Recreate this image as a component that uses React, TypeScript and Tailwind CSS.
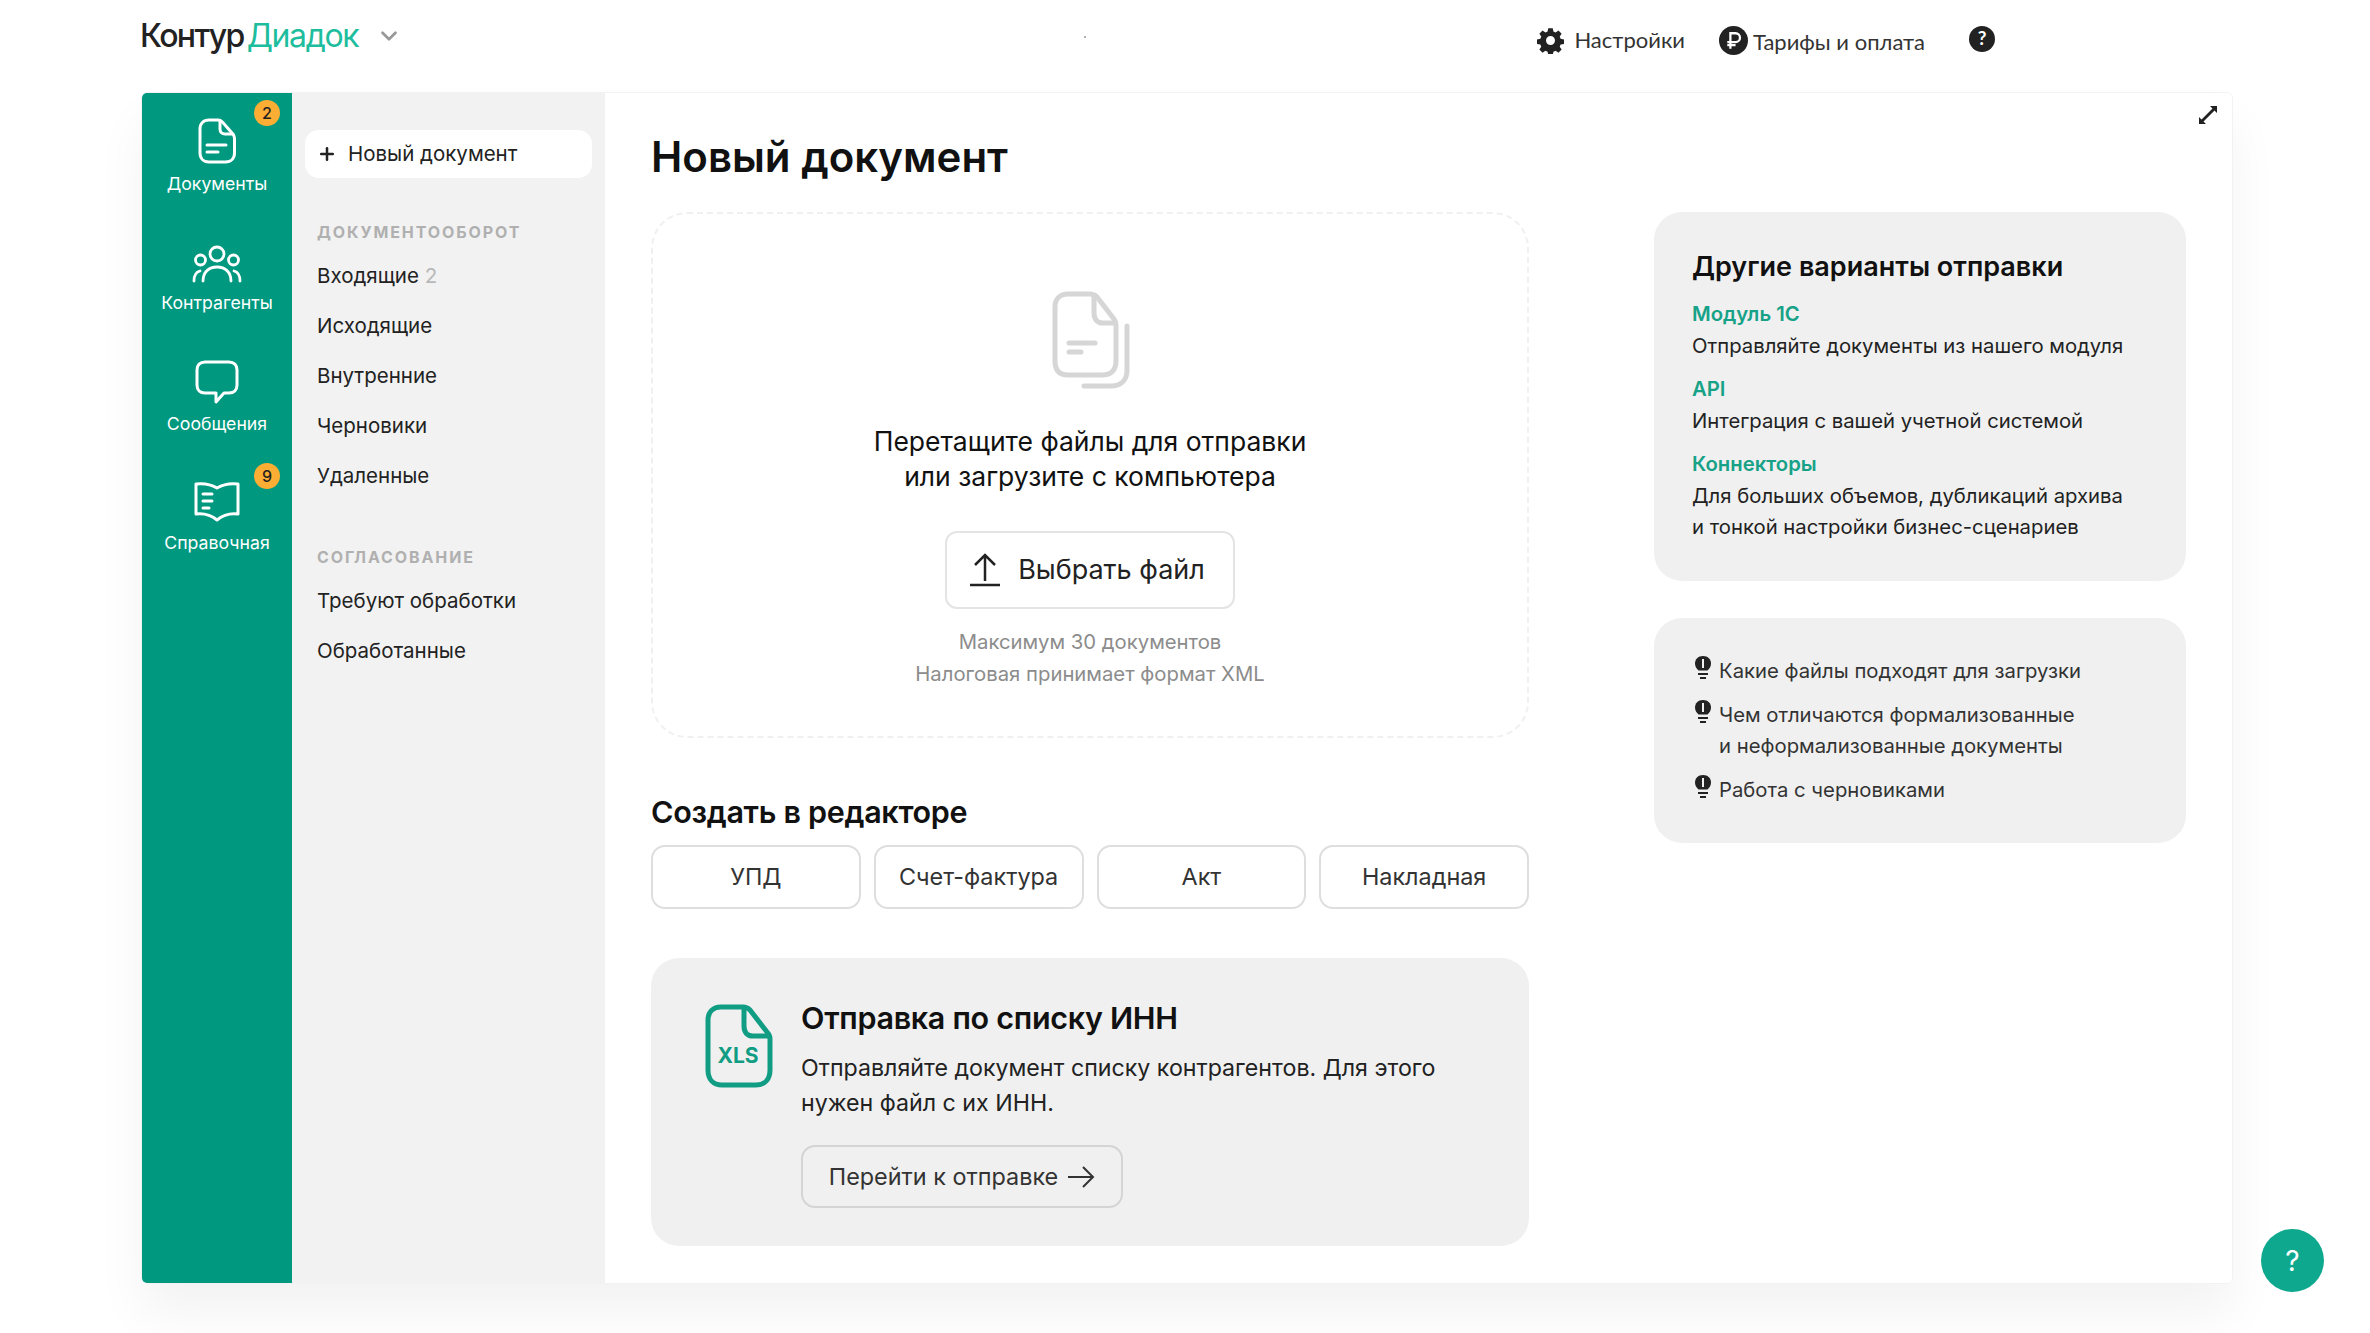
import { ChevronDown, Plus } from "lucide-react";

const SANS = "font-['Inter','Liberation_Sans',sans-serif]";

function DocIcon() {
  return (
    <svg width="38" height="46" viewBox="0 0 38 46" fill="none" stroke="#fff" strokeWidth="3" strokeLinecap="round" strokeLinejoin="round">
      <path d="M11 2h9c2 0 3 .6 4.400 2l9.600 11c1.400 1.500 2.500 3 2.500 5v15c0 5.500-3.500 9-9 9H11c-5.500 0-9-3.500-9-9V11c0-5.500 3.500-9 9-9z" />
      <path d="M22 3v8c0 3 2 5 5 5h8" />
      <path d="M9 27h19M9 34h11" />
    </svg>
  );
}

function PeopleIcon() {
  return (
    <svg width="50" height="38" viewBox="0 0 50 38" fill="none" stroke="#fff" strokeWidth="2.800" strokeLinecap="round">
      <circle cx="25" cy="9" r="7" />
      <circle cx="8.500" cy="15" r="5" />
      <circle cx="41.500" cy="15" r="5" />
      <path d="M11 36c0-9 6-14 14-14s14 5 14 14" />
      <path d="M2 36c0-5 2-9 6-10M48 36c0-5-2-9-6-10" />
    </svg>
  );
}

function ChatIcon() {
  return (
    <svg width="44" height="44" viewBox="0 0 44 44" fill="none" stroke="#fff" strokeWidth="3" strokeLinejoin="round">
      <path d="M10 2h24c5 0 8 3 8 8v15c0 5-3 8-8 8h-5l-8 9v-9H10c-5 0-8-3-8-8V10c0-5 3-8 8-8z" />
    </svg>
  );
}

function BookIcon() {
  return (
    <svg width="46" height="42" viewBox="0 0 46 42" fill="none" stroke="#fff" strokeWidth="3" strokeLinecap="round" strokeLinejoin="round">
      <path d="M23 7C18 4 10 2 2 3v30c8-1 15 1 21 6 6-5 13-7 21-6V3c-8-1-16 1-21 4" />
      <path d="M9 13h9M9 20h9M9 27h6" />
    </svg>
  );
}

function RailItem({ icon, label, badge, iconBox }: { icon: React.ReactNode; label: string; badge?: string; iconBox: string }) {
  return (
    <div className="relative flex w-full flex-col items-center">
      <div className={`flex w-full items-end justify-center ${iconBox}`}>{icon}</div>
      <span className="mt-[9px] text-[17.700px] leading-[22px] text-white">{label}</span>
      {badge && (
        <span className="absolute top-[-18px] right-[12px] flex h-[26px] w-[26px] items-center justify-center rounded-full bg-[#fcad33] text-[16px] font-medium text-[#222]">
          {badge}
        </span>
      )}
    </div>
  );
}

function TipIcon() {
  return (
    <svg width="18" height="26" viewBox="0 0 18 26" fill="#222" className="shrink-0">
      <path d="M9 1C4 1 1 4.500 1 8.500c0 3 1.500 5 3.500 7h9c2-2 3.500-4 3.500-7C17 4.500 14 1 9 1z" />
      <path d="M8 4h2v9H8z" fill="#f0f0f0" />
      <path d="M4 18h10v2H4zM6 22h6v2H6z" />
    </svg>
  );
}

const NAV_ONE = ["Исходящие", "Внутренние", "Черновики", "Удаленные"];

const OPTIONS = [
  { title: "Модуль 1С", text: ["Отправляйте документы из нашего модуля"] },
  { title: "API", text: ["Интеграция с вашей учетной системой"] },
  { title: "Коннекторы", text: ["Для больших объемов, дубликаций архива", "и тонкой настройки бизнес-сценариев"] },
];

export default function App() {
  return (
    <div className={`relative h-[1333px] overflow-hidden bg-white text-[#222] ${SANS}`}>
      {/* top bar */}
      <header className="flex h-[92px] items-start pt-[16px] pl-[140px]">
        <div className="flex items-center">
          <span className="text-[32px] leading-[40px] font-medium tracking-[-1.600px] text-[#222]">Контур</span>
          <span className="ml-[3px] text-[32px] leading-[40px] tracking-[-1.400px] text-[#1dbd9d]">Диадок</span>
          <ChevronDown className="ml-[18px] text-[#999]" size={26} strokeWidth={2.500} />
        </div>
        <span className="absolute top-[36px] left-[1084px] h-[2px] w-[2px] rounded-full bg-[#999]" />
        <div className="ml-auto flex items-center pt-[7px] pr-[375px] font-['Lato',sans-serif] text-[22px] text-[#333]">
          <svg width="27" height="27" viewBox="0 0 24 24" fill="#222">
            <path fillRule="evenodd" d="M10 1h4l.6 3 1.900.8 2.600-1.700 2.800 2.800-1.700 2.600.8 1.900 3 .6v4l-3 .6-.8 1.900 1.700 2.600-2.800 2.800-2.600-1.700-1.900.8-.6 3h-4l-.6-3-1.900-.8-2.600 1.700-2.800-2.800 1.700-2.600-.8-1.900-3-.6v-4l3-.6.8-1.900-1.700-2.600 2.800-2.800 2.600 1.700 1.900-.8zM12 8a4 4 0 100 8 4 4 0 000-8z" />
          </svg>
          <span className="mt-[-2px] ml-[10px]">Настройки</span>
          <svg width="29" height="29" viewBox="0 0 28 28" className="ml-[34px]">
            <circle cx="14" cy="14" r="14" fill="#222" />
            <path d="M11 22V7h5a4 4 0 010 8.500H8M8 18.500h8" fill="none" stroke="#fff" strokeWidth="2.200" />
          </svg>
          <span className="mt-[2px] ml-[5px]">Тарифы и оплата</span>
          <span className="mt-[-4px] ml-[44px] flex h-[26px] w-[26px] items-center justify-center rounded-full bg-[#222] text-[19px] font-bold text-white">?</span>
        </div>
      </header>

      {/* app panel */}
      <div className="ml-[141px] flex h-[1192px] w-[2092px] overflow-hidden rounded-[6px] border border-[#f2f2f2] shadow-[0_30px_50px_rgba(0,0,0,0.05)]">
        {/* green rail */}
        <aside className="flex w-[150px] shrink-0 flex-col items-center bg-[#009980] pt-[25px]">
          <RailItem icon={<DocIcon />} label="Документы" badge="2" iconBox="h-[46px]" />
          <div className="mt-[50px] w-full"><RailItem icon={<PeopleIcon />} label="Контрагенты" iconBox="h-[38px]" /></div>
          <div className="mt-[46px] w-full"><RailItem icon={<ChatIcon />} label="Сообщения" iconBox="h-[44px]" /></div>
          <div className="mt-[46px] w-full"><RailItem icon={<BookIcon />} label="Справочная" badge="9" iconBox="h-[42px]" /></div>
        </aside>

        {/* nav column */}
        <nav className="w-[313px] shrink-0 bg-[#f2f2f2] px-[13px] pt-[37px]">
          <div className="flex h-[48px] items-center rounded-[14px] bg-white pl-[12px] text-[20.500px]">
            <Plus size={20} strokeWidth={3} className="text-[#222]" />
            <span className="ml-[11px]">Новый документ</span>
          </div>
          <div className="px-[12px]">
            <p className="mt-[44px] text-[16px] leading-[20px] font-bold tracking-[1.900px] text-[#b0b0b0]">ДОКУМЕНТООБОРОТ</p>
            <ul className="mt-[9px] text-[20.500px] leading-[50px]">
              <li>Входящие <span className="text-[#b8b8b8]">2</span></li>
              {NAV_ONE.map((item) => (
                <li key={item}>{item}</li>
              ))}
            </ul>
            <p className="mt-[46px] text-[16px] leading-[20px] font-bold tracking-[1.900px] text-[#b0b0b0]">СОГЛАСОВАНИЕ</p>
            <ul className="mt-[9px] text-[20.500px] leading-[50px]">
              <li>Требуют обработки</li>
              <li>Обработанные</li>
            </ul>
          </div>
        </nav>

        {/* content */}
        <main className="relative flex flex-1 gap-[125px] bg-white pl-[46px]">
          <svg width="20" height="20" viewBox="0 0 20 20" fill="#222" className="absolute top-[12px] right-[14px]">
            <path d="M12 1h7v7l-2.500-2.500L5.500 16.500 8 19H1v-7l2.500 2.500L14.500 3.500z" />
          </svg>

          <section className="w-[878px] shrink-0">
            <h1 className="mt-[40px] text-[42px] leading-[48px] font-semibold text-[#111]">Новый документ</h1>

            <div className="mt-[31px] flex h-[526px] flex-col items-center rounded-[36px] border-2 border-dashed border-[#f0f0f0] pt-[77px]">
              <svg width="78" height="98" viewBox="0 0 78 98" fill="none" stroke="#d6d6d6" strokeWidth="5" strokeLinecap="round" strokeLinejoin="round" className="ml-[2px]">
                <path d="M16 3h22c3 0 5 1 7 3l17 22c1.500 2 2 3.500 2 6v36c0 9-5 14-14 14H16C7 84 3 79 3 70V16C3 8 8 3 16 3z" />
                <path d="M42 5v17c0 6 3 10 9 10h12" />
                <path d="M17 52h26M17 61h12" />
                <path d="M75 35v44c0 10-6 16-16 16H32" />
              </svg>
              <p className="mt-[35px] text-center text-[26.500px] leading-[35px] text-[#111]">
                Перетащите файлы для отправки<br />или загрузите с компьютера
              </p>
              <button className="mt-[37px] flex h-[78px] w-[290px] items-center justify-center gap-[17px] rounded-[12px] border-2 border-[#e4e4e4] bg-white pr-[6px] text-[27px] text-[#222]">
                <svg width="32" height="34" viewBox="0 0 32 34" fill="none" stroke="#222" strokeWidth="2.500">
                  <path d="M16 28V3M6 12l10-10 10 10M1 32h30" />
                </svg>
                Выбрать файл
              </button>
              <p className="mt-[17px] text-center text-[20.300px] leading-[32px] text-[#8c8c8c]">
                Максимум 30 документов<br />Налоговая принимает формат XML
              </p>
            </div>

            <h2 className="mt-[54px] text-[30.500px] leading-[40px] font-semibold tracking-[-0.300px] text-[#111]">Создать в редакторе</h2>
            <div className="mt-[13px] flex gap-[13px] text-[23.400px] text-[#333]">
              {["УПД", "Счет-фактура", "Акт", "Накладная"].map((label) => (
                <button key={label} className="flex h-[64px] flex-1 items-center justify-center rounded-[14px] border-2 border-[#dedede] bg-white">
                  {label}
                </button>
              ))}
            </div>

            <div className="mt-[49px] flex h-[288px] rounded-[28px] bg-[#f0f0f0] pt-[46px] pl-[54px]">
              <svg width="68" height="84" viewBox="0 0 68 84" fill="none" stroke="#119c84" strokeWidth="5" strokeLinecap="round" strokeLinejoin="round" className="shrink-0">
                <path d="M16 3h22c3 0 5 1 7 3l17 22c2 2 3 4 3 7v31c0 9-5 15-14 15H17C8 81 3 75 3 66V16C3 8 8 3 16 3z" />
                <path d="M39 5v17c0 6 3 10 9 10h15" />
                <text x="33" y="59" textAnchor="middle" fontSize="21" fontWeight="700" fill="#119c84" stroke="none" fontFamily="Inter, sans-serif">XLS</text>
              </svg>
              <div className="ml-[28px]">
                <h3 className="mt-[-6px] text-[30.500px] leading-[40px] font-semibold tracking-[-0.300px] text-[#111]">Отправка по списку ИНН</h3>
                <p className="mt-[13px] text-[23.200px] leading-[35px] text-[#222]">
                  Отправляйте документ списку контрагентов. Для этого<br />нужен файл с их ИНН.
                </p>
                <button className="mt-[24px] flex h-[63px] w-[322px] items-center justify-center gap-[9px] rounded-[14px] border-2 border-[#d4d4d4] text-[23.400px] text-[#333]">
                  Перейти к отправке
                  <svg width="28" height="24" viewBox="0 0 28 24" fill="none" stroke="#333" strokeWidth="2">
                    <path d="M1 12h25M16 2l10 10-10 10" />
                  </svg>
                </button>
              </div>
            </div>
          </section>

          <section className="mt-[119px] w-[532px] shrink-0">
            <div className="h-[369px] rounded-[28px] bg-[#f0f0f0] px-[38px] pt-[35px]">
              <h3 className="text-[27px] leading-[40px] font-semibold text-[#111]">Другие варианты отправки</h3>
              <div className="mt-[11px] flex flex-col gap-[12px] text-[20.300px] leading-[31.500px]">
                {OPTIONS.map((opt) => (
                  <div key={opt.title}>
                    <p className="font-semibold text-[#17a288]">{opt.title}</p>
                    {opt.text.map((line) => (
                      <p key={line}>{line}</p>
                    ))}
                  </div>
                ))}
              </div>
            </div>

            <div className="mt-[37px] flex h-[225px] flex-col gap-[13px] rounded-[28px] bg-[#f0f0f0] pt-[37px] pl-[40px] text-[20.300px] leading-[31px] text-[#333]">
              <div className="flex gap-[7px]"><TipIcon /><span>Какие файлы подходят для загрузки</span></div>
              <div className="flex gap-[7px]"><TipIcon /><span>Чем отличаются формализованные<br />и неформализованные документы</span></div>
              <div className="flex gap-[7px]"><TipIcon /><span>Работа с черновиками</span></div>
            </div>
          </section>
        </main>
      </div>

      {/* help bubble */}
      <div className="absolute top-[1229px] left-[2261px] flex h-[63px] w-[63px] items-center justify-center rounded-full bg-[#0ea88f] text-[28px] text-white">?</div>
    </div>
  );
}
